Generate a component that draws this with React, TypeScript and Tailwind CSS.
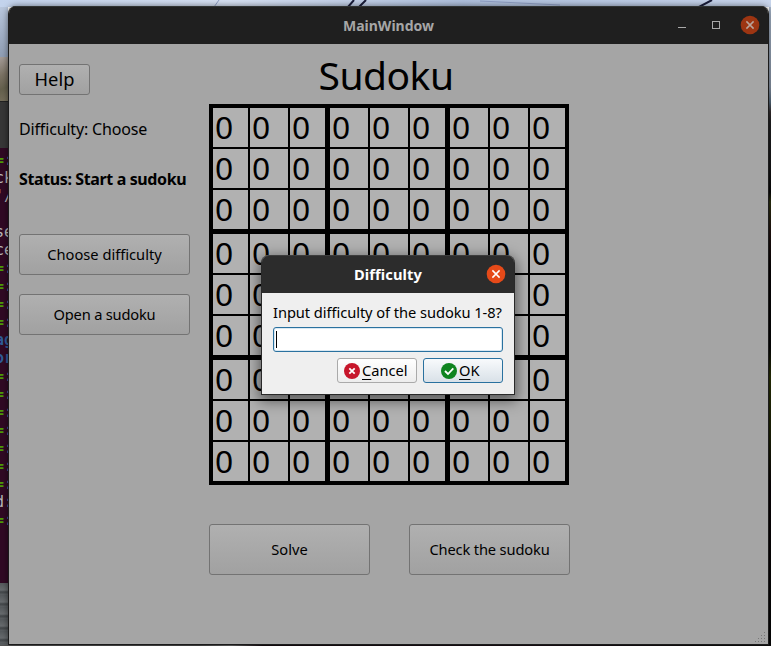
import React from "react";

const GREEN = "text-[#4e9a06] font-bold";
const GREY = "text-[#b9b9b9]";
const BLUE = "text-[#2f5c97] font-bold";

const TERMINAL: { a: string; b: string; color: string }[] = [
  { a: "=", b: ":", color: GREEN },
  { a: "c", b: "k", color: GREY },
  { a: "'", b: "/", color: GREY },
  { a: " ", b: " ", color: GREY },
  { a: "s", b: "e", color: GREY },
  { a: "c", b: "e", color: GREY },
  { a: "=", b: ":", color: GREEN },
  { a: "=", b: ":", color: GREEN },
  { a: "=", b: ":", color: GREEN },
  { a: "=", b: ":", color: GREEN },
  { a: "a", b: "g", color: BLUE },
  { a: "o", b: "r", color: BLUE },
  { a: "=", b: ":", color: GREEN },
  { a: "=", b: ":", color: GREEN },
  { a: "=", b: ":", color: GREEN },
  { a: "=", b: ":", color: GREEN },
  { a: "=", b: ":", color: GREEN },
  { a: "=", b: ":", color: GREEN },
  { a: "=", b: ":", color: GREEN },
  { a: "d", b: ":", color: GREY },
  { a: "=", b: ":", color: GREEN },
];

function Desktop() {
  return (
    <div className="flex h-full w-full flex-col">
      <div className="h-[7px] w-full bg-[linear-gradient(90deg,#c3d3ec,#d6e0f2_30%,#aebfdc_60%,#c8d5ec)]">
        <svg className="block" width="771" height="7" viewBox="0 0 771 7">
          <path d="M354 0L348 7M366 0L359 7M712 0L699 7" stroke="#1a1d3a" strokeWidth="2" />
          <path d="M219 0L214 7M480 1L560 5" stroke="#8f9fc4" strokeWidth="1" />
        </svg>
      </div>
      <div className="flex flex-1 justify-between">
        <div className="flex w-2 flex-col overflow-hidden">
          <div className="h-[50px] bg-[linear-gradient(180deg,#b9c7dd,#8f9db3)]" />
          <div className="h-11 bg-[linear-gradient(160deg,#a59c98,#7b7263_40%,#65604d_70%,#77705c)]" />
          <div className="h-[47px] border-t border-[#222] bg-[#373737]" />
          <div className="h-[435px] bg-[#300a24] pt-[3px]">
            {TERMINAL.map((row, i) => (
              <div
                key={i}
                className="-ml-[5px] h-[18px] font-['DejaVu_Sans_Mono',monospace] text-[15px] leading-[18px] whitespace-pre"
              >
                <span className={row.color}>{row.a}</span>
                <span className={row.b === ":" ? "text-[#7d93b3]" : row.color}>{row.b}</span>
              </div>
            ))}
          </div>
          <div className="flex-1 bg-[repeating-linear-gradient(180deg,#55595c_0px,#676b6e_7px,#414548_9px,#5d6164_12px)]" />
        </div>
        <div className="w-[2px] bg-[linear-gradient(180deg,#a7b6ca,#8793a4_80px,#55697b_95px,#342d2e_105px,#202022_115px,#161617_160px,#080808_185px,#2c3010_195px,#211310_225px,#080304_260px,#060606_340px,#293005_370px,#1c2105_430px,#090305_480px,#070707)]" />
      </div>
      <div className="h-px bg-[linear-gradient(90deg,#555,#4a4a4a_26%,#666_30%,#180e13_34%,#1b1018_70%,#111)]" />
    </div>
  );
}

function QtButton({ className, children }: { className: string; children: React.ReactNode }) {
  return (
    <button
      className={
        "flex items-center justify-center rounded-[3px] border border-[#737373] bg-linear-to-b from-[#b0b0b0] to-[#a1a1a1] text-black whitespace-nowrap " +
        className
      }
    >
      {children}
    </button>
  );
}

const CELL_WIDTHS = [
  "w-[35px]", "w-[38px]", "w-[35px]",
  "w-[38px]", "w-[38px]", "w-[35px]",
  "w-[38px]", "w-[38px]", "w-[35px]",
];

/* Black backing shows through the gaps as rules; gaps between 3x3 blocks are heavier. */
function SudokuBoard() {
  return (
    <div className="flex h-[381px] w-[360px] flex-col gap-[5px] bg-black p-1">
      {[0, 1, 2].map((band) => (
        <div key={band} className="flex flex-col gap-[2px]">
          {[0, 1, 2].map((r) => (
            <div key={r} className="flex h-[39px] gap-[5px]">
              {[0, 1, 2].map((block) => (
                <div key={block} className="flex gap-[2px]">
                  {[0, 1, 2].map((c) => (
                    <div key={c} className={"h-[39px] bg-[#b1b1b1] pl-[2.4px] text-[31.5px] leading-[37px] " + CELL_WIDTHS[block * 3 + c]}>
                      <span className="inline-block origin-left scale-x-[1.01]">0</span>
                    </div>
                  ))}
                </div>
              ))}
            </div>
          ))}
        </div>
      ))}
    </div>
  );
}

function CloseIcon({ fill, stroke }: { fill: string; stroke: string }) {
  return (
    <svg width="20" height="20" viewBox="0 0 20 20">
      <circle cx="10" cy="10" r="9.3" fill={fill} />
      <path d="M6.4 6.4L13.6 13.6M13.6 6.4L6.4 13.6" stroke={stroke} strokeWidth="1.5" />
    </svg>
  );
}

function MainWindow() {
  return (
    <div className="absolute top-[6px] left-2 flex h-[639px] w-[761px] flex-col overflow-hidden rounded-t-[8px] border-x border-b border-[#1b1b1b] bg-[#a5a5a5] shadow-[0_0_6px_rgba(0,0,0,0.5)]">
      <header className="flex h-[38px] items-center border-t border-[#303332] bg-[#1f1f1f]">
        <div className="w-[120px]" />
        <h1 className="flex-1 text-center text-[14px] font-bold text-[#a6a6a6]">MainWindow</h1>
        <div className="flex w-[120px] items-center justify-end pr-2 pb-[2px]">
          <svg width="54" height="20" viewBox="0 0 54 20">
            <path d="M2 12.5H10" stroke="#a9a9a9" />
            <rect x="36.5" y="6.5" width="7" height="7" fill="none" stroke="#a9a9a9" />
          </svg>
          <div className="ml-[10px]">
            <CloseIcon fill="#9d3512" stroke="#b9a49b" />
          </div>
        </div>
      </header>
      <main className="flex flex-1">
        <aside className="ml-[10px] flex w-[171px] flex-col pt-5">
          <QtButton className="h-[31px] w-[71px] pb-px text-[18.3px]">Help</QtButton>
          <p className="mt-[22px] h-6 text-[16px] leading-6 tracking-[-0.16px] whitespace-nowrap">Difficulty: Choose</p>
          <p className="mt-[26px] h-6 text-[16px] leading-6 font-bold tracking-[-0.38px] whitespace-nowrap">Status: Start a sudoku</p>
          <QtButton className="mt-[43px] h-[41px] w-[171px] pb-[2px] text-[14.67px]">Choose difficulty</QtButton>
          <QtButton className="mt-[19px] h-[41px] w-[171px] pb-[2px] text-[14.67px] tracking-[-0.2px]">Open a sudoku</QtButton>
        </aside>
        <section className="ml-[19px] flex w-[361px] flex-col">
          <h2 className="h-[60px] pr-[7px] text-center text-[39px] leading-[62px] tracking-[-0.5px]">Sudoku</h2>
          <SudokuBoard />
          <div className="mt-[39px] flex justify-between">
            <QtButton className="h-[51px] w-[161px] pb-[2px] text-[14.67px]">Solve</QtButton>
            <QtButton className="h-[51px] w-[161px] pb-[2px] text-[14.67px] tracking-[-0.15px]">Check the sudoku</QtButton>
          </div>
        </section>
        <div className="flex flex-1 items-end justify-end pr-[2px] pb-px">
          <svg width="12" height="12" viewBox="0 0 12 12" fill="#777">
            {[0, 1, 2, 3].map((r) =>
              Array.from({ length: r + 1 }, (_, c) => (
                <rect key={r + "-" + c} x={10 - c * 3} y={1 + r * 3} width="1" height="1" />
              )),
            )}
          </svg>
        </div>
      </main>
    </div>
  );
}

function DifficultyDialog() {
  return (
    <div className="absolute top-[255px] left-[261px] flex h-[140px] w-[254px] flex-col rounded-t-[8px] border-x border-b border-[#292929] bg-[#efefef] shadow-[0_4px_14px_2px_rgba(0,0,0,0.5)]">
      <header className="flex h-[38px] items-center rounded-t-[7px] border-t border-[#3d3d3d] bg-[#2c2c2c]">
        <div className="w-10" />
        <h2 className="flex-1 pb-[2px] text-center text-[14.67px] font-bold tracking-[0.1px] text-white">Difficulty</h2>
        <div className="flex w-10 justify-end pr-2 pb-px">
          <CloseIcon fill="#e64a19" stroke="#ffffff" />
        </div>
      </header>
      <div className="flex flex-1 flex-col px-[11px] pt-[9px]">
        <label className="h-5 text-[14.67px] leading-5 tracking-[-0.06px] whitespace-nowrap">Input difficulty of the sudoku 1-8?</label>
        <div className="mt-[5px] flex h-[25px] w-[230px] items-center rounded-[3px] border border-[#2a719f] bg-white pl-[2px] shadow-[inset_0_0_0_1px_#d9e8f2]">
          <div className="h-[17px] w-px bg-black" />
        </div>
        <div className="mt-[6px] flex justify-end gap-[6px]">
          <button className="flex h-[25px] w-[80px] items-center rounded-[3px] border border-[#aaaaaa] bg-linear-to-b from-white to-[#ededed] pl-[6px] text-[14.67px] leading-5">
            <svg width="16" height="16" viewBox="0 0 16 16">
              <circle cx="8" cy="8" r="8" fill="#c7162b" />
              <path d="M5.3 5.3L10.7 10.7M10.7 5.3L5.3 10.7" stroke="#fff" strokeWidth="1.8" />
            </svg>
            <span className="ml-[2px] pb-[2px]">
              <span className="underline decoration-1 underline-offset-3">C</span>ancel
            </span>
          </button>
          <button className="flex h-[25px] w-[80px] items-center rounded-[3px] border border-[#2a719f] bg-linear-to-b from-[#f8fafc] to-[#d9e1e8] pl-[17px] text-[14.67px] leading-5">
            <svg width="16" height="16" viewBox="0 0 16 16">
              <circle cx="8" cy="8" r="8" fill="#0e8420" />
              <path d="M4 8L7 11L12.3 5.4" fill="none" stroke="#fff" strokeWidth="1.8" />
            </svg>
            <span className="ml-[2px] pb-[2px]">
              <span className="underline decoration-1 underline-offset-3">O</span>K
            </span>
          </button>
        </div>
      </div>
    </div>
  );
}

export default function App() {
  return (
    <div className="relative h-[646px] w-[771px] overflow-hidden font-['Noto_Sans',sans-serif] text-black">
      <Desktop />
      <MainWindow />
      <DifficultyDialog />
    </div>
  );
}
